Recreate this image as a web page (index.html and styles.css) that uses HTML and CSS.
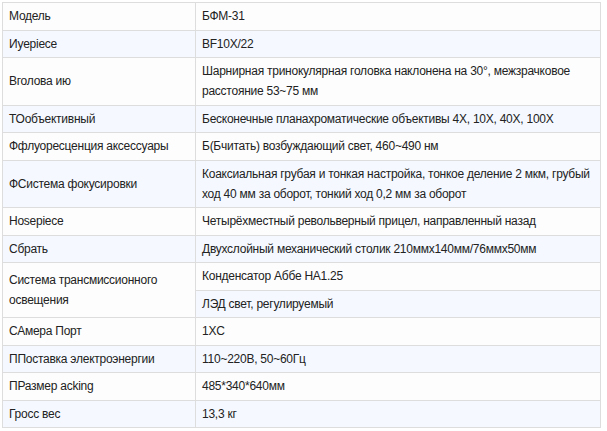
FILE: index.html
```html
<!DOCTYPE html>
<html lang="ru">
<head>
<meta charset="utf-8">
<link rel="stylesheet" href="styles.css">
</head>
<body>
<table class="spec">
  <colgroup><col class="c-name"><col class="c-val"></colgroup>
  <tbody>
    <tr><td>Модель</td><td>БФМ-31</td></tr>
    <tr><td>Иуepiece</td><td>BF10X/22</td></tr>
    <tr><td>Вголова ию</td><td>Шарнирная тринокулярная головка наклонена на 30°, межзрачковое расстояние 53~75 мм</td></tr>
    <tr><td>ТОобъективный</td><td>Бесконечные планахроматические объективы 4X, 10X, 40X, 100X</td></tr>
    <tr><td>Ффлуоресценция аксессуары</td><td>Б(Бчитать) возбуждающий свет, 460~490 нм</td></tr>
    <tr><td>ФСистема фокусировки</td><td>Коаксиальная грубая и тонкая настройка, тонкое деление 2 мкм, грубый ход 40 мм за оборот, тонкий ход 0,2 мм за оборот</td></tr>
    <tr><td>Hosepiece</td><td>Четырёхместный револьверный прицел, направленный назад</td></tr>
    <tr><td>Сбрать</td><td>Двухслойный механический столик 210ммх140мм/76ммх50мм</td></tr>
    <tr><td rowspan="2" class="span">Система трансмиссионного освещения</td><td>Конденсатор Аббе НА1.25</td></tr>
    <tr><td>ЛЭД свет, регулируемый</td></tr>
    <tr><td>САмера Порт</td><td>1XC</td></tr>
    <tr><td>ППоставка электроэнергии</td><td>110~220В, 50~60Гц</td></tr>
    <tr><td>ПРазмер acking</td><td>485*340*640мм</td></tr>
    <tr><td>Гросс вес</td><td>13,3 кг</td></tr>
  </tbody>
</table>
</body>
</html>
```
FILE: styles.css
```css
html, body {
  margin: 0;
  padding: 0;
  background: #ffffff;
}
body {
  padding: 2px;
  font-family: "Liberation Sans", Arial, sans-serif;
  font-size: 12px;
  letter-spacing: -0.25px;
  color: #222222;
}
.spec {
  border-collapse: collapse;
  width: 598px;
  table-layout: fixed;
}
.c-name { width: 193px; }
.c-val { width: 405px; }
.spec td {
  border: 1px solid #dddddd;
  padding: 3.25px 6px;
  line-height: 20px;
  vertical-align: middle;
  text-align: left;
}
.spec tr:nth-child(odd) td {
  background: #fdfdfd;
}
.spec tr:nth-child(even) td {
  background: #f5f9ff;
}
.spec tr td.span {
  background: #fdfdfd;
}
.spec tr td.span + td {
  background: #fdfdfd;
}
```
